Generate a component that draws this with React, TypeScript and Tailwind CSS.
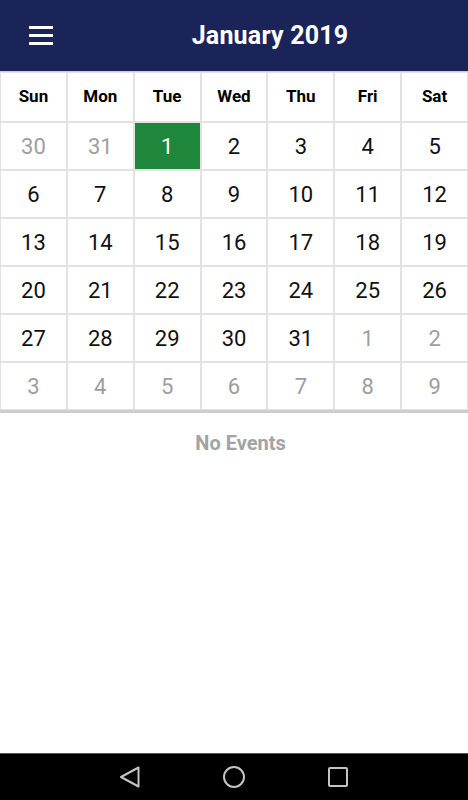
const DAY_NAMES = ['Sun', 'Mon', 'Tue', 'Wed', 'Thu', 'Fri', 'Sat']

type Day = { n: number; current: boolean; selected?: boolean }

function buildDays(): Day[] {
  const days: Day[] = [{ n: 30, current: false }, { n: 31, current: false }]
  for (let i = 1; i <= 31; i++) days.push({ n: i, current: true, selected: i === 1 })
  for (let i = 1; i <= 9; i++) days.push({ n: i, current: false })
  return days
}

function NavBar() {
  return (
    <div className="h-[47px] bg-black border-t border-[#555] flex items-center justify-center">
      <div className="flex items-center gap-[80px]">
        <svg width="24" height="24" viewBox="0 0 24 24" fill="none">
          <path d="M20.5 2.5 L3 12 L20.5 21.5 Z" stroke="#c4c4c4" strokeWidth="2" strokeLinejoin="round" />
        </svg>
        <svg width="24" height="24" viewBox="0 0 24 24" fill="none">
          <circle cx="12" cy="12" r="10" stroke="#c4c4c4" strokeWidth="2" />
        </svg>
        <svg width="24" height="24" viewBox="0 0 24 24" fill="none">
          <rect x="3" y="3" width="18" height="18" rx="1" stroke="#c4c4c4" strokeWidth="2" />
        </svg>
      </div>
    </div>
  )
}

export default function App() {
  const days = buildDays()
  return (
    <div className="w-[468px] h-[800px] flex flex-col bg-white font-['Roboto',sans-serif]">
      {/* Toolbar */}
      <div className="h-[72px] bg-[#1b2459] border-b border-[#c9cbd6] flex items-center shrink-0">
        <button className="ml-[29px] w-[26px] h-[26px] flex flex-col justify-center gap-[5px]">
          <span className="block h-[3px] w-[24px] bg-white" />
          <span className="block h-[3px] w-[24px] bg-white" />
          <span className="block h-[3px] w-[24px] bg-white" />
        </button>
        <h1 className="flex-1 text-center pl-[17px] mt-[1px] text-white text-[25px] font-bold tracking-[0.2px]">
          January 2019
        </h1>
      </div>

      {/* Calendar */}
      <div className="grid grid-cols-7 border-b-[3px] border-[#cdcdcd] shrink-0">
        {DAY_NAMES.map((d) => (
          <div
            key={d}
            className="h-[50px] bg-white border border-[#e2e2e2] flex items-center justify-center text-[17px] font-bold text-black"
          >
            {d}
          </div>
        ))}
        {days.map((d, i) => (
          <div
            key={i}
            className={
              d.selected
                ? 'h-[48px] bg-[#1f873b] border border-[#e2e2e2] flex items-center justify-center text-[22px] text-white'
                : d.current
                  ? 'h-[48px] bg-white border border-[#e2e2e2] flex items-center justify-center text-[22px] text-[#111]'
                  : 'h-[48px] bg-white border border-[#e2e2e2] flex items-center justify-center text-[22px] text-[#9e9e9e]'
            }
          >
            {d.n}
          </div>
        ))}
      </div>

      <div className="flex-1">
        <p className="mt-[15px] pl-[13px] text-center text-[20px] font-bold text-[#a3a3a3]">No Events</p>
      </div>

      <NavBar />
    </div>
  )
}
